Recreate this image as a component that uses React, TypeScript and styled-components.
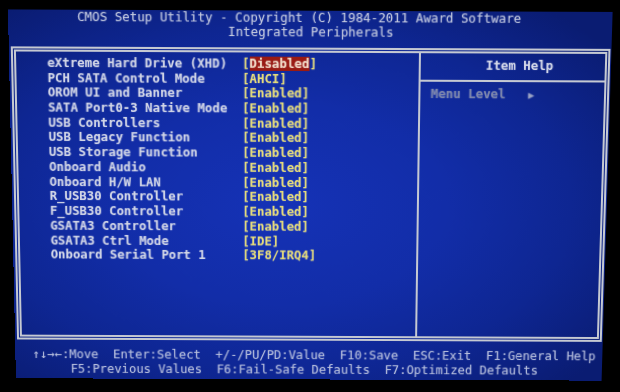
import React from "react";
import styled, { createGlobalStyle } from "styled-components";

const GlobalStyle = createGlobalStyle`
  html, body { margin: 0; padding: 0; background: #000; }
  body { width: 620px; height: 392px; overflow: hidden; }
  #root { width: 620px; height: 392px; }
`;

const Stage = styled.div`
  width: 620px;
  height: 392px;
  box-sizing: border-box;
  padding: 12.8px 0 0 11.65px;
  background: #000;
  overflow: hidden;
`;

const Screen = styled.div`
  width: 595.3px;
  height: 370px;
  display: flex;
  flex-direction: column;
  background: radial-gradient(
    ellipse 70% 68% at 45% 52%,
    #1532b6 0%,
    #122da8 40%,
    #0e2692 70%,
    #0a1c72 100%
  );
  transform-origin: 50% 50%;
  transform: rotate(0.24deg) perspective(1000px) rotateX(-4.95deg);
  font-family: "DejaVu Sans Mono", "Liberation Mono", monospace;
  font-size: 12.32px;
  white-space: pre;
  text-shadow: 0 0 1.5px rgba(200, 210, 255, 0.35);
`;

const Header = styled.header`
  display: flex;
  flex-direction: column;
  color: #c3c9de;
  line-height: 14.2px;
`;

const TextLine = styled.div<{ $indent: number }>`
  padding-left: ${(p) => p.$indent}px;
`;

const Frame = styled.div`
  margin: 7.7px 1.6px 0 2.4px;
  height: 294.4px;
  box-sizing: border-box;
  border: 5px double #c5c9d2;
  display: flex;
`;

const ItemList = styled.div`
  width: 397.2px;
  box-sizing: border-box;
  padding: 3.8px 0 0 30.3px;
  display: grid;
  grid-template-columns: 192.5px auto;
  grid-auto-rows: 14.73px;
  align-content: start;
  line-height: 14.73px;
  font-weight: bold;
`;

const Label = styled.span`
  color: #d2d6e6;
`;

const Value = styled.span`
  color: #e6dc78;
`;

const Highlight = styled.span`
  background: #9a1a12;
  color: #f3dcc8;
`;

const HelpPanel = styled.div`
  flex: 1;
  border-left: 2px solid #c5c9d2;
  display: flex;
  flex-direction: column;
`;

const HelpTitle = styled.div`
  padding: 4.7px 0 6.5px 64.7px;
  line-height: 14.73px;
  font-weight: bold;
  color: #d8dcea;
  border-bottom: 2px solid #c5c9d2;
`;

const HelpBody = styled.div`
  padding: 5.4px 0 0 10.7px;
  line-height: 14.73px;
  font-weight: bold;
  color: #7e87ab;
`;

const Arrow = styled.span`
  font-size: 10px;
  color: #9aa2c2;
`;

const Footer = styled.footer`
  margin-top: 7.8px;
  display: flex;
  flex-direction: column;
  line-height: 14.75px;
  color: #b7bfdc;
`;

type Item = { label: string; value: string; selected?: boolean };

const items: Item[] = [
  { label: "eXtreme Hard Drive (XHD)", value: "Disabled", selected: true },
  { label: "PCH SATA Control Mode", value: "AHCI" },
  { label: "OROM UI and Banner", value: "Enabled" },
  { label: "SATA Port0-3 Native Mode", value: "Enabled" },
  { label: "USB Controllers", value: "Enabled" },
  { label: "USB Legacy Function", value: "Enabled" },
  { label: "USB Storage Function", value: "Enabled" },
  { label: "Onboard Audio", value: "Enabled" },
  { label: "Onboard H/W LAN", value: "Enabled" },
  { label: "R_USB30 Controller", value: "Enabled" },
  { label: "F_USB30 Controller", value: "Enabled" },
  { label: "GSATA3 Controller", value: "Enabled" },
  { label: "GSATA3 Ctrl Mode", value: "IDE" },
  { label: "Onboard Serial Port 1", value: "3F8/IRQ4" },
];

export default function App() {
  return (
    <>
      <GlobalStyle />
      <Stage>
        <Screen>
          <Header>
            <TextLine $indent={67.9}>
              CMOS Setup Utility - Copyright (C) 1984-2011 Award Software
            </TextLine>
            <TextLine $indent={216.5}>Integrated Peripherals</TextLine>
          </Header>
          <Frame>
            <ItemList>
              {items.map((it) => (
                <React.Fragment key={it.label}>
                  <Label>{it.label}</Label>
                  <Value>
                    [
                    {it.selected ? (
                      <Highlight>{it.value}</Highlight>
                    ) : (
                      it.value
                    )}
                    ]
                  </Value>
                </React.Fragment>
              ))}
            </ItemList>
            <HelpPanel>
              <HelpTitle>Item Help</HelpTitle>
              <HelpBody>
                Menu Level   <Arrow>▶</Arrow>
              </HelpBody>
            </HelpPanel>
          </Frame>
          <Footer>
            <TextLine $indent={17.5}>
              ↑↓→←:Move  Enter:Select  +/-/PU/PD:Value  F10:Save  ESC:Exit  F1:General Help
            </TextLine>
            <TextLine $indent={55.7}>
              F5:Previous Values  F6:Fail-Safe Defaults  F7:Optimized Defaults
            </TextLine>
          </Footer>
        </Screen>
      </Stage>
    </>
  );
}
